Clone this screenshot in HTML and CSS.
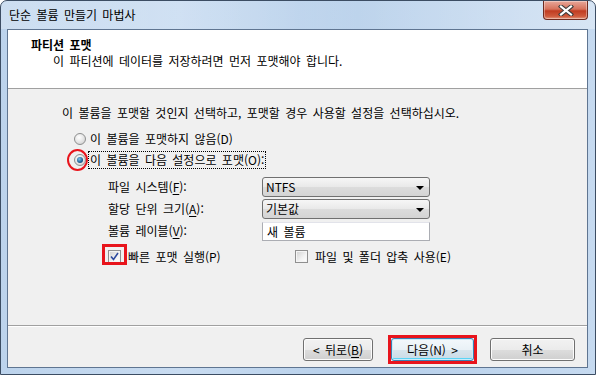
FILE: index.html
```html
<!DOCTYPE html>
<html lang="ko">
<head>
  <meta charset="UTF-8">
  <title>단순 볼륨 만들기 마법사</title>
  <link rel="stylesheet" href="styles.css">
</head>
<body>
  <div class="window">
    <!-- title bar -->
    <div class="titlebar">
      <span class="title">단순 볼륨 만들기 마법사</span>
      <button class="close">
        <svg width="16" height="11" viewBox="0 0 16 11">
          <path d="M3 1.5 L13 9.5 M13 1.5 L3 9.5" stroke="#3b3b3b" stroke-width="4.2" stroke-linecap="square"/>
          <path d="M3 1.5 L13 9.5 M13 1.5 L3 9.5" stroke="#fff" stroke-width="2.2" stroke-linecap="square"/>
        </svg>
      </button>
    </div>

    <div class="client">
      <div class="header">
        <h1>파티션 포맷</h1>
        <p>이 파티션에 데이터를 저장하려면 먼저 포맷해야 합니다.</p>
      </div>

      <div class="body">
        <p class="intro">이 볼륨을 포맷할 것인지 선택하고, 포맷할 경우 사용할 설정을 선택하십시오.</p>

        <div class="radios">
          <label class="radio-row">
            <span class="radio"></span>
            <span>이 볼륨을 포맷하지 않음(D)</span>
          </label>
          <label class="radio-row">
            <span class="radio checked"></span>
            <span class="focus">이 볼륨을 다음 설정으로 포맷(O):</span>
            <span class="mark-ellipse"></span>
          </label>
        </div>

        <div class="form">
          <span class="lbl">파일 시스템(<u>F</u>):</span>
          <div class="select">NTFS<span class="arrow"></span></div>
          <span class="lbl">할당 단위 크기(<u>A</u>):</span>
          <div class="select">기본값<span class="arrow"></span></div>
          <span class="lbl">볼륨 레이블(<u>V</u>):</span>
          <div class="textbox">새 볼륨</div>
        </div>

        <div class="checks">
          <label class="check-row first">
            <span class="check checked">
              <svg width="9" height="9" viewBox="0 0 9 9"><path d="M1 4.5 L3.5 7.5 L8 1" stroke="#2d4a9e" stroke-width="1.6" fill="none"/></svg>
            </span>
            <span>빠른 포맷 실행(P)</span>
            <span class="mark-box"></span>
          </label>
          <label class="check-row">
            <span class="check"></span>
            <span>파일 및 폴더 압축 사용(E)</span>
          </label>
        </div>
      </div>

      <div class="footer">
        <button class="btn back">&lt; 뒤로(<u>B</u>)</button>
        <button class="btn next">다음(N) &gt;<span class="mark-btn"></span></button>
        <button class="btn cancel">취소</button>
      </div>
    </div>
  </div>
</body>
</html>
```

FILE: styles.css
```css
:root {
  --frame: #b9d1ea;
  --face: #f0f0f0;
  --text: #000;
  --mark: #e8141c;
  --font: "Noto Sans CJK KR", "Noto Sans", sans-serif;
}
*, *::before, *::after { box-sizing: border-box; margin: 0; padding: 0; }
body {
  width: 596px;
  height: 375px;
  overflow: hidden;
  background: #fff;
  font-family: var(--font);
  font-size: 12px;
  color: var(--text);
  word-spacing: 2px;
}
u { text-decoration: underline; text-underline-offset: 2px; }

.window {
  width: 596px;
  height: 375px;
  border: 1px solid #3c4d63;
  border-radius: 7px 7px 0 0;
  background: linear-gradient(to right, #bcd3ec 0%, #c9dcf1 30%, #b6cfea 60%, #c6daf0 100%);
  padding: 0 7px 6px 6px;
  display: flex;
  flex-direction: column;
}

/* title bar */
.titlebar {
  height: 28px;
  display: flex;
  justify-content: space-between;
  align-items: flex-start;
  background: linear-gradient(to right, rgba(255,255,255,0.25), rgba(255,255,255,0.05) 50%, rgba(255,255,255,0.3));
  margin: 0 -7px 0 -6px;
  padding: 0 7px 0 7px;
  border-radius: 6px 6px 0 0;
}
.title {
  line-height: 28px;
  padding-left: 1px;
  color: #000;
}
.close {
  width: 45px;
  height: 19px;
  border: 1px solid #6e2b20;
  border-top: none;
  border-radius: 0 0 4px 4px;
  background: linear-gradient(to bottom, #e8a89a 0%, #d7725c 45%, #c03c21 55%, #cf5b3d 85%, #e49a80 100%);
  box-shadow: inset 0 0 0 1px rgba(255,255,255,0.35);
  display: flex;
  align-items: center;
  justify-content: center;
}

/* client area */
.client {
  flex: 1;
  border: 1px solid #5f7591;
  background: var(--face);
  display: flex;
  flex-direction: column;
}
.header {
  height: 59px;
  background: #fff;
  border-bottom: 1px solid #a0a0a0;
  padding: 7px 0 0 23px;
}
.header h1 {
  font-size: 12px;
  font-weight: 700;
  line-height: 16px;
}
.header p {
  line-height: 16px;
  padding-left: 22px;
}

.body {
  flex: 1;
  padding: 16px 0 0 54px;
  display: flex;
  flex-direction: column;
}
.intro { line-height: 16px; }

.radios {
  margin: 7px 0 0 12px;
  display: flex;
  flex-direction: column;
}
.radio-row {
  height: 21px;
  display: flex;
  align-items: center;
  gap: 4px;
  position: relative;
}
.radio {
  width: 12px;
  height: 12px;
  border-radius: 50%;
  border: 1px solid #8e8f8f;
  background: radial-gradient(circle at 40% 35%, #fff 0%, #e6e6e6 50%, #c9c9c9 100%);
  display: flex;
  align-items: center;
  justify-content: center;
}
.radio.checked::after {
  content: '';
  width: 6px;
  height: 6px;
  border-radius: 50%;
  background: radial-gradient(circle at 40% 35%, #7fc4f0 0%, #1c5f93 60%, #0c3c66 100%);
}
.focus {
  outline: 1px dotted #000;
  outline-offset: 1px;
  line-height: 14px;
}
.mark-ellipse {
  position: absolute;
  left: -7px;
  top: 0;
  width: 21px;
  height: 22px;
  border: 2px solid var(--mark);
  border-radius: 50%;
}

.form {
  margin: 7px 0 0 46px;
  display: grid;
  grid-template-columns: 154px 168px;
  grid-auto-rows: 20px;
  row-gap: 2px;
  align-items: center;
}
.lbl { line-height: 16px; }
.select {
  height: 20px;
  border: 1px solid #707070;
  border-radius: 3px;
  background: linear-gradient(to bottom, #f6f6f6 0%, #e9e9e9 50%, #dcdcdc 51%, #d4d4d4 100%);
  padding-left: 3px;
  line-height: 18px;
  position: relative;
  font-size: 12px;
}
.arrow {
  position: absolute;
  right: 5px;
  top: 8px;
  border-left: 4px solid transparent;
  border-right: 4px solid transparent;
  border-top: 4px solid #000;
}
.textbox {
  height: 19px;
  border: 1px solid #abadb3;
  border-top-color: #e2e3ea;
  background: #fff;
  padding-left: 4px;
  line-height: 17px;
}

.checks {
  margin: 5px 0 0 46px;
  height: 20px;
  display: flex;
  align-items: center;
}
.check-row {
  display: flex;
  align-items: center;
  gap: 7px;
  position: relative;
}
.check-row.first { width: 187px; }
.check {
  width: 13px;
  height: 13px;
  border: 1px solid #8f8f8f;
  background: linear-gradient(135deg, #cfcfcf 0%, #f2f2f2 60%, #fff 100%);
  box-shadow: inset 0 0 0 1px #f4f4f4;
  display: flex;
  align-items: center;
  justify-content: center;
}
.mark-box {
  position: absolute;
  left: -6px;
  top: -4px;
  width: 25px;
  height: 21px;
  border: 3px solid var(--mark);
}

/* buttons */
.footer {
  height: 42px;
  border-top: 1px solid #a0a0a0;
  box-shadow: inset 0 1px 0 #fff;
  display: flex;
  justify-content: flex-end;
  align-items: flex-start;
  padding: 12px 12px 0 0;
}
.btn {
  height: 23px;
  font-family: var(--font);
  font-size: 12px;
  word-spacing: 2px;
  color: #000;
  border: 1px solid #707070;
  border-radius: 3px;
  background: linear-gradient(to bottom, #f2f2f2 0%, #ebebeb 50%, #dddddd 51%, #cfcfcf 100%);
  box-shadow: inset 0 0 0 1px #fcfcfc;
  position: relative;
}
.back { width: 70px; }
.next {
  width: 83px;
  margin-left: 18px;
  border-color: #3c7fb1;
  box-shadow: inset 0 0 0 1px #c9ecfb, inset 0 -2px 0 #5cd4f5;
  background: linear-gradient(to bottom, #f3f8fb 0%, #e9f1f6 50%, #d8e5ed 51%, #c9dbe6 100%);
}
.cancel { width: 85px; margin-left: 16px; }
.mark-btn {
  position: absolute;
  left: -4px;
  top: -4px;
  right: -4px;
  bottom: -4px;
  border: 3px solid var(--mark);
}
```
